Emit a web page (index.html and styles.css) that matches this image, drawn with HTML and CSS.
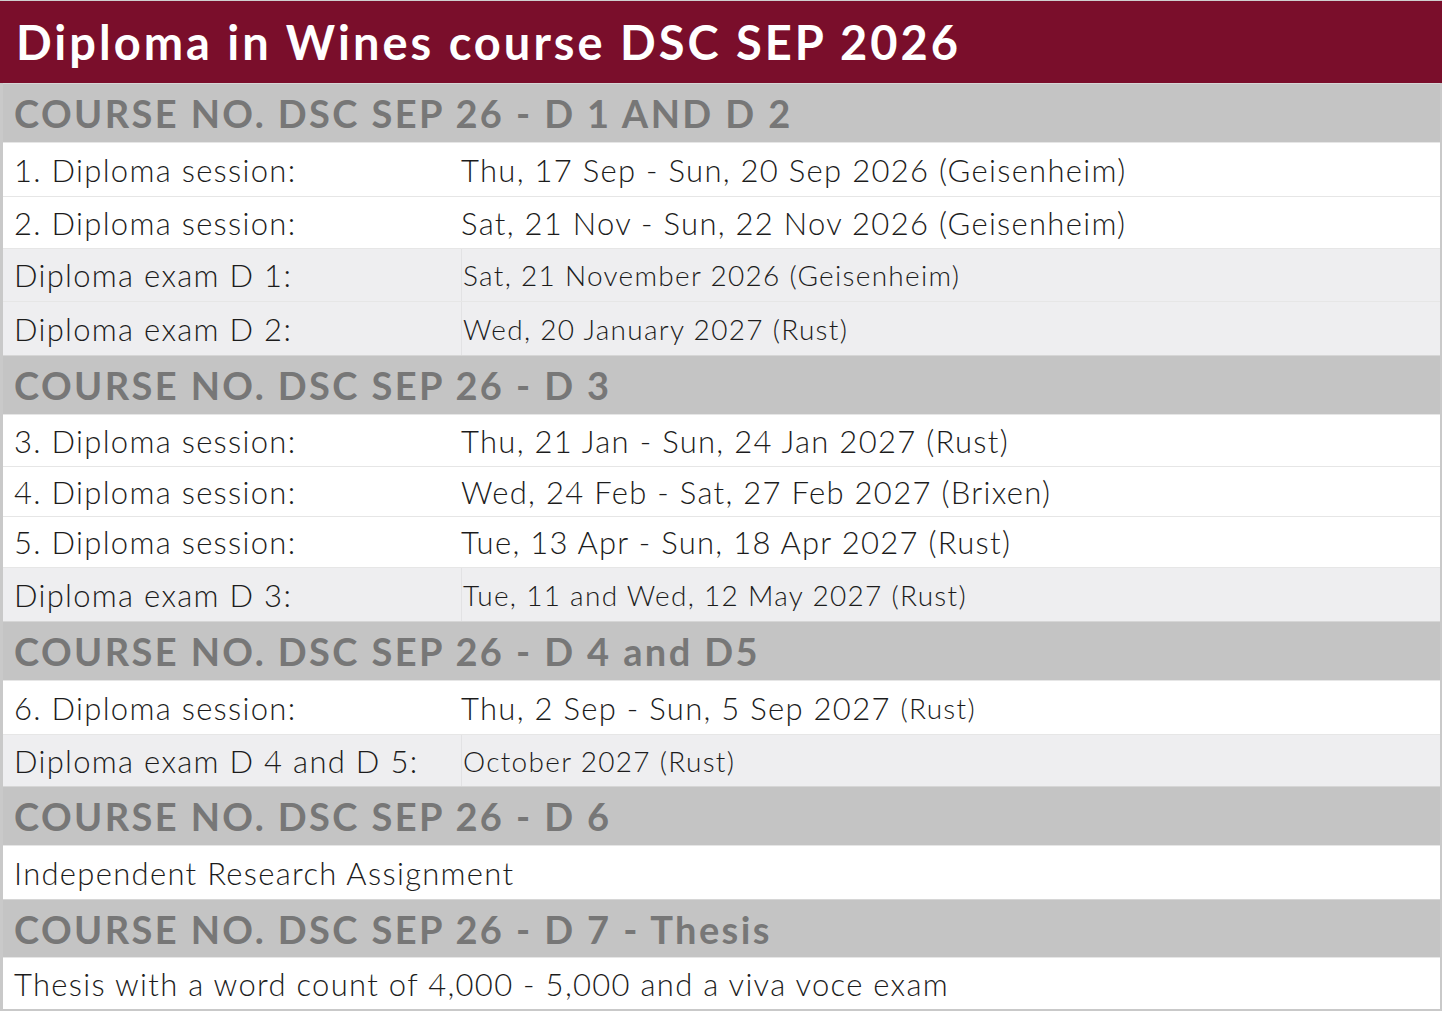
FILE: index.html
```html
<!DOCTYPE html>
<html lang="en">
<head>
<meta charset="utf-8">
<title>Diploma in Wines course DSC SEP 2026</title>
<link rel="stylesheet" href="styles.css">
</head>
<body>
<div class="sheet">
  <h1 class="title">Diploma in Wines course DSC SEP 2026</h1>

  <div class="head h59">COURSE NO. DSC SEP 26 - D 1 AND D 2</div>
  <div class="row h54"><span class="label">1. Diploma session:</span><span class="value">Thu, 17 Sep - Sun, 20 Sep 2026 (Geisenheim)</span></div>
  <div class="row h52"><span class="label">2. Diploma session:</span><span class="value">Sat, 21 Nov - Sun, 22 Nov 2026 (Geisenheim)</span></div>
  <div class="row alt h53"><span class="label">Diploma exam D 1:</span><span class="value small">Sat, 21 November 2026 (Geisenheim)</span></div>
  <div class="row alt h54"><span class="label">Diploma exam D 2:</span><span class="value small">Wed, 20 January 2027 (Rust)</span></div>

  <div class="head h59">COURSE NO. DSC SEP 26 - D 3</div>
  <div class="row h52"><span class="label">3. Diploma session:</span><span class="value">Thu, 21 Jan - Sun, 24 Jan 2027 (Rust)</span></div>
  <div class="row h50"><span class="label">4. Diploma session:</span><span class="value">Wed, 24 Feb - Sat, 27 Feb 2027 (Brixen)</span></div>
  <div class="row h51"><span class="label">5. Diploma session:</span><span class="value">Tue, 13 Apr - Sun, 18 Apr 2027 (Rust)</span></div>
  <div class="row alt h54"><span class="label">Diploma exam D 3:</span><span class="value small">Tue, 11 and Wed, 12 May 2027 (Rust)</span></div>

  <div class="head h59">COURSE NO. DSC SEP 26 - D 4 and D5</div>
  <div class="row h54"><span class="label">6. Diploma session:</span><span class="value">Thu, 2 Sep - Sun, 5 Sep 2027&nbsp;<span class="smaller">(Rust)</span></span></div>
  <div class="row alt h52"><span class="label">Diploma exam D 4 and D 5:</span><span class="value small">October 2027 (Rust)</span></div>

  <div class="head h59">COURSE NO. DSC SEP 26 - D 6</div>
  <div class="row h54"><span class="label wide">Independent Research Assignment</span></div>

  <div class="head h58">COURSE NO. DSC SEP 26 - D 7 - Thesis</div>
  <div class="row h52 last"><span class="label wide">Thesis with a word count of 4,000 - 5,000 and a viva voce exam</span></div>
</div>
</body>
</html>
```

FILE: styles.css
```css
html, body {
  margin: 0;
  padding: 0;
  background: #ffffff;
}

.sheet {
  width: 1442px;
  box-sizing: border-box;
  border-top: 1px solid #cfcfcf;
  border-right: 2px solid #c9c9c9;
  border-bottom: 2px solid #c9c9c9;
  border-left: 3px solid #c9c9c9;
  display: flex;
  flex-direction: column;
  font-family: "Lato", "Open Sans", sans-serif;
  color: #1c1c1c;
}

.title {
  margin: 0 -2px 0 -3px;
  height: 82px;
  box-sizing: border-box;
  padding-left: 16px;
  display: flex;
  align-items: center;
  background: #7a0e2b;
  color: #ffffff;
  font-size: 47px;
  font-weight: 700;
  letter-spacing: 3px;
}

.head {
  box-sizing: border-box;
  padding-left: 11px;
  display: flex;
  align-items: center;
  background: #c4c4c4;
  color: #777777;
  font-size: 38px;
  font-weight: 700;
  letter-spacing: 2.4px;
  border-top: 1px solid #d6d6d6;
}

.row {
  box-sizing: border-box;
  display: flex;
  align-items: center;
  background: #ffffff;
  font-size: 31px;
  font-weight: 300;
  letter-spacing: 1.3px;
  border-top: 1px solid #e6e6e6;
}

.row.alt {
  background: #eeeef0;
}

.label {
  width: 447px;
  padding-left: 11px;
  flex: none;
}

.label.wide {
  width: auto;
}

.value {
  align-self: stretch;
  display: flex;
  align-items: center;
  white-space: pre;
}

.row.alt .value {
  border-left: 1px solid #e2e2e4;
  padding-left: 1px;
}

.value.small {
  font-size: 28px;
}

.smaller {
  font-size: 28px;
}

.h50 { height: 50px; }
.h51 { height: 51px; }
.h52 { height: 52px; }
.h53 { height: 53px; }
.h54 { height: 54px; }
.h58 { height: 58px; }
.h59 { height: 59px; }
```
